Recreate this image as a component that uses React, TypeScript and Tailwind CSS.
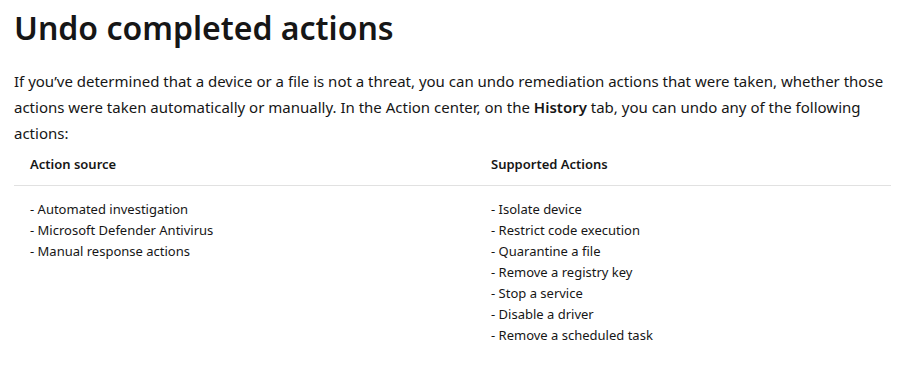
const sources = ['Automated investigation', 'Microsoft Defender Antivirus', 'Manual response actions'];

const actions = [
    'Isolate device',
    'Restrict code execution',
    'Quarantine a file',
    'Remove a registry key',
    'Stop a service',
    'Disable a driver',
    'Remove a scheduled task',
];

const App = () => {
    return (
        <div className="min-h-screen bg-white text-[#161616] font-['Noto_Sans',sans-serif]">
            <div className="w-[877px] ml-[14px] pt-[6px]">
                {/* Heading */}
                <h1 className="text-[32px] leading-[44px] font-semibold">Undo completed actions</h1>

                {/* Intro */}
                <p className="mt-[18px] text-[15px] leading-[26px]">
                    If you’ve determined that a device or a file is not a threat, you can undo remediation actions that were
                    taken, whether those actions were taken automatically or manually. In the Action center, on the{' '}
                    <strong className="font-semibold">History</strong> tab, you can undo any of the following actions:
                </p>

                {/* Table */}
                <table className="w-full text-[13px] border-collapse">
                    <thead>
                        <tr className="border-b border-[#e1e1e1]">
                            <th className="w-[461px] text-left font-semibold px-[16px] pt-[8px] pb-[11px] leading-[20px]">Action source</th>
                            <th className="text-left font-semibold px-[16px] pt-[8px] pb-[11px] leading-[20px]">Supported Actions</th>
                        </tr>
                    </thead>
                    <tbody>
                        <tr>
                            <td className="align-top px-[16px] pt-[13px] leading-[21px]">
                                {sources.map((s) => (
                                    <div key={s}>- {s}</div>
                                ))}
                            </td>
                            <td className="align-top px-[16px] pt-[13px] leading-[21px]">
                                {actions.map((a) => (
                                    <div key={a}>- {a}</div>
                                ))}
                            </td>
                        </tr>
                    </tbody>
                </table>
            </div>
        </div>
    );
};

export default App;
